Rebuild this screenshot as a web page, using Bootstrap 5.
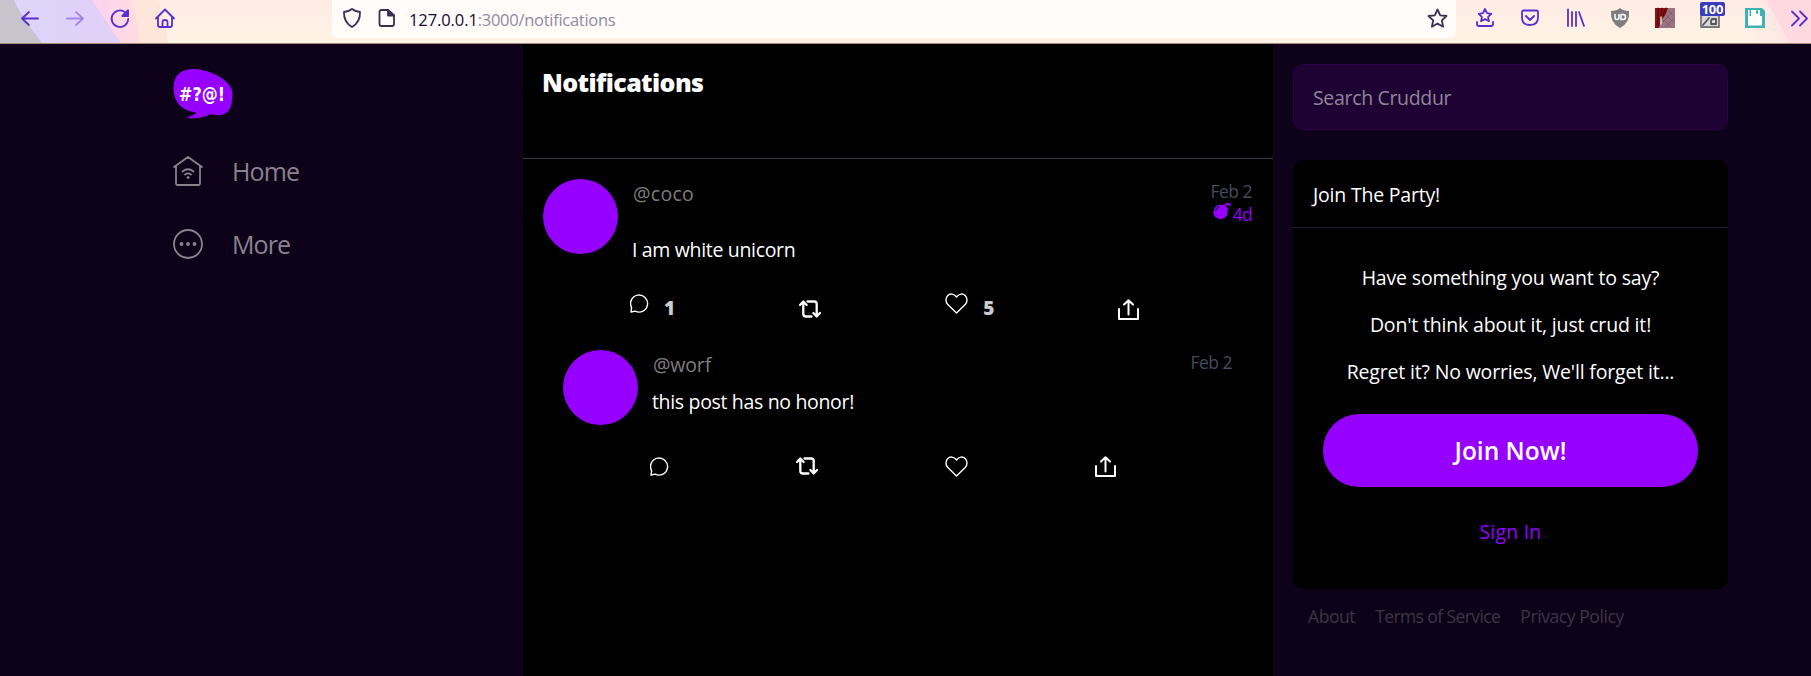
<!DOCTYPE html>
<html lang="en">
<head>
<meta charset="utf-8">
<title>Cruddur</title>
<link href="https://cdn.jsdelivr.net/npm/bootstrap@5.3.0/dist/css/bootstrap.min.css" rel="stylesheet">
<style>
body{font-family:"Open Sans","Noto Sans",sans-serif;font-size:19.5px;line-height:24px;letter-spacing:-.2px;background:#0d0219;color:#fff;height:676px;overflow:hidden}
svg{display:block;flex:none;overflow:visible}
.chrome{height:44px;border-bottom:1px solid #a98778;position:relative}
.theme-art{position:absolute;inset:0;z-index:0}
.tools{position:relative;z-index:1;height:43px}
.tools svg{fill:none;stroke:#5a2fd0;stroke-width:1.8;stroke-linecap:round;stroke-linejoin:round}
.nav-tools{width:332px;padding:8px 0 0 20px;gap:25px}
.urlbar{width:1124px;height:38px;background:#fffcfa;border-radius:0 0 6px 6px;padding:7px 8px 0 10px}
.urlbar svg{stroke:#3b2d55}
.url{font-size:16.5px;letter-spacing:-.28px;color:#918a9e;margin-left:12px;margin-top:1px}
.url b{font-weight:400;color:#17092e;letter-spacing:-.1px}
.ext{padding:8px 0 0 20px;gap:25px}
.pct{position:relative}
.count{position:absolute;top:-6px;left:0;width:25px;height:14px;background:#3b3bbd;border-radius:2px;font:700 13px/14px "Open Sans",sans-serif;letter-spacing:-.2px;text-align:center}
.shell{height:632px}
.side{width:523px;padding:25px 0 0 173px}
.side a{color:#8a828f;font-size:25px;line-height:30px;letter-spacing:-.9px;text-decoration:none;gap:28px}
.feed{width:750px;background:#000}
.feed-head{height:115px;border-bottom:1px solid #3a3b4f;padding:21px 20px 0}
.feed-head h1{font-size:25px;line-height:34px;font-weight:800;letter-spacing:-.6px;margin:0 -1px}
.post{padding:20px 20px 0;height:191px}
.reply{padding:0 40px}
.avatar{width:75px;height:75px;background:#9500ff;flex:none;margin-right:15px}
.handle{color:#7d7d7d;margin-top:3px;letter-spacing:.3px}
.msg{letter-spacing:-.33px;margin-left:-1px}
.reply .handle{letter-spacing:-.15px}
.when{font-size:17.5px;letter-spacing:-.5px;line-height:23px;color:#474a5c;text-align:right;padding:1px 1px 0 0}
.when span{color:#9500ff;letter-spacing:-.7px;gap:2px}
.acts{position:relative}
.acts svg{stroke:#fff;fill:none;stroke-linecap:round;stroke-linejoin:round}
.acts b{font-weight:800;font-size:19px;color:#ccc;letter-spacing:0;margin:3px 0 0 15px;line-height:24px;width:10px}
.aside{padding:20px 0 0 20px;width:455px}
.search{height:66px;background:#1e0233;border:1px solid #290344;border-radius:10px;color:#908598;padding:21px 19px;letter-spacing:-.33px}
.join{height:429px;background:#000;border-radius:10px;margin-top:30px}
.join-head{height:68px;border-bottom:1px solid #1c2029;padding:23px 20px}
.join p{margin:0 0 23px;letter-spacing:-.17px}
.join-body{padding:38px 30px 0;text-align:center}
.btn-join{width:375px;height:73px;background:#9500ff;color:#fff;border:0;border-radius:36px;font-size:24.5px;font-weight:600;letter-spacing:0;padding-top:8px;display:block;margin-top:30px}
.signin{color:#9500ff;letter-spacing:.2px;text-decoration:none;display:block;margin-top:33px}
.foot{padding:15px;gap:20px;font-size:17.5px}
.foot a{color:#3e3446;text-decoration:none}
</style>
</head>
<body>
<svg width="0" height="0" style="position:absolute">
<symbol id="bubble" viewBox="0 0 19 19"><path d="M1 18 L1.6 13.6 A8.5 8.5 0 1 1 5.2 17.1 Z" stroke-width="1.4"/></symbol>
<symbol id="repost" viewBox="0 0 22 18"><path d="M1 5 4.300 1.500 7.600 5M4.300 1.800V14Q4.300 16.500 6.800 16.500H12.500M8.500 1.500H15.200Q17.700 1.500 17.700 4V16M14.400 13 17.700 16.500 21 13" stroke-width="2.300"/></symbol>
<symbol id="heart" viewBox="0 0 23 21"><path d="M11.500 20 2.800 11.600C.4 9 .4 5 2.600 2.700 5 .3 9 .4 11.500 4 14 .4 18 .3 20.400 2.700 22.600 5 22.600 9 20.200 11.600Z" stroke-width="1.400"/></symbol>
<symbol id="share" viewBox="0 0 21 21"><path d="M1 10V20H20V10M10.500 15.500V1.500M6 5.500 10.500 1.300 15 5.500" stroke-width="2"/></symbol>
</svg>
<header class="chrome">
<svg class="theme-art" width="1811" height="43" viewBox="0 0 1811 43">
<defs><linearGradient id="cream" x2="0" y2="1"><stop stop-color="#feebe5"/><stop offset="1" stop-color="#fff3e5"/></linearGradient>
<linearGradient id="lilac"><stop stop-color="#dcd6fb"/><stop offset="1" stop-color="#e2cff8"/></linearGradient>
<linearGradient id="pink"><stop stop-color="#fdcff3"/><stop offset="1" stop-color="#ffdbe0"/></linearGradient>
<linearGradient id="blush"><stop stop-color="#ffe2e2" stop-opacity="0"/><stop offset="1" stop-color="#ffdfe4"/></linearGradient></defs>
<path fill="url(#cream)" d="M0 0H1811V43H0Z"/><path fill="#ffe6da" d="M100 0H157Q167 20 168 43H100Z"/>
<path fill="url(#pink)" d="M80 0H131Q138 20 139 43H80Z"/><path fill="url(#lilac)" d="M0 0H92L121 43H0Z"/><path fill="#c8c4ce" d="M0 0H14Q20 15 42 43H0Z"/>
<path fill="url(#blush)" d="M1740 0H1811V43H1740Z"/><path fill="#ffd9e0" d="M1766 0H1811V43H1790Z"/></svg>
<div class="tools d-flex">
<div class="nav-tools d-flex">
<svg width="20" height="20"><path d="M9 4 2 10.500 9 17M2 10.500H18"/></svg>
<svg width="20" height="20" opacity=".45"><path d="M11 4 18 10.500 11 17M18 10.500H2"/></svg>
<svg width="20" height="20"><path d="M18.200 11A8.300 8.300 0 1 1 15.500 4.600M18 2.500V8H12.500Z"/><path d="M18 2.500V8H12.500Z" fill="#5a2fd0"/></svg>
<svg width="20" height="20"><path d="M1 10.500 10 1.500 19 10.500M3 9V17Q3 19 5 19H15Q17 19 17 17V9M7.500 19V14Q7.500 12 10 12T12.500 14V19"/></svg>
</div>
<div class="urlbar d-flex">
<svg width="20" height="21"><path d="M10 2Q13 4.500 18 5 18.500 15 10 20 1.500 15 2 5 7 4.500 10 2Z"/></svg>
<svg width="20" height="21" style="margin-left:15px"><path d="M4.500 3H11L17 8.500V17Q17 19 15 19H4.500Q2.500 19 2.500 17V5Q2.500 3 4.500 3Z"/><path fill="#3b2d55" d="M11 3V8.500H17Z"/></svg>
<div class="url"><b>127.0.0.1</b>:3000/notifications</div>
<svg class="ms-auto" width="21" height="21"><path d="M10.500 2.500 13.200 8.300 19.500 9 14.800 13.300 16.100 19.700 10.500 16.500 4.900 19.700 6.200 13.300 1.500 9 7.800 8.300Z"/></svg>
</div>
<div class="ext d-flex">
<svg width="18" height="20"><path d="M9 1 11 5.200 15.300 5.800 12.100 8.800 12.900 13.200 9 11 5.100 13.200 5.900 8.800 2.700 5.800 7 5.200ZM1 14V16Q1 18 3 18H15Q17 18 17 16V14"/></svg>
<svg style="margin-left:2px" width="18" height="20"><path d="M2.500 2.500H15.500Q17 2.500 17 4V9.500Q17 17 9 17T1 9.500V4Q1 2.500 2.500 2.500ZM5 8 9 12 13 8"/></svg>
<svg style="margin-left:3px" width="18" height="20"><path d="M1 1.500V18M5 4V18M9 4V18M12 4 17 18"/></svg>
<svg width="20" height="20"><path fill="#7d7d7d" stroke="none" d="M10 0Q13 3 19 3 20 15 10 20 0 15 1 3 7 3 10 0Z"/><path stroke="#fff" stroke-width="1.500" d="M5 6.500V9.500Q5 11.500 7 11.500T9 9.500V6.500M11 6.500V11.500H13Q15.500 11.500 15.500 9T13 6.500H11"/></svg>
<svg width="20" height="20"><path fill="#9a7480" stroke="none" d="M0 0H20V20H0Z"/><path fill="#8c1114" stroke="none" d="M0 0H13Q11 8 6 12L4 20H0Z"/><path stroke="#54080c" stroke-width="1.200" d="M3 0V18M7 0Q7 7 5 11M11 0 8 8"/><path stroke="#ddd" stroke-width="1.500" d="M6 9V16"/><path stroke="#755864" stroke-width=".7" d="M13 2 19 8M11 7 19 15M9 12 16 19M19 2 8 14M19 10 11 19"/></svg>
<div class="pct"><svg width="20" height="20"><path fill="#d9d9d9" stroke="#777" d="M1 5H19V19H1Z"/><path stroke="#555" d="M3 17 9 10M12 11H16V16H11V13Z"/></svg><span class="count">100</span></div>
<svg width="20" height="20"><path fill="#3eb3b3" stroke="none" d="M0 0H17L20 3V20H0Z"/><path fill="#fff" stroke="none" d="M6 2H15V8H6ZM3 2H4.500V8H17V17.500H3Z"/><path stroke="#3eb3b3" stroke-width="2" d="M12 3V5"/></svg>
<svg width="20" height="20"><path d="M2 3.500 9 10.500 2 17.500M10 3.500 17 10.500 10 17.500"/></svg>
</div>
</div>
</header>
<div class="shell d-flex">
<nav class="side">
<svg width="61" height="51" viewBox="5.500 5 61 51"><path fill="#9500ff" d="M6 24C6 10 15 4.500 28 5 42 6 65 16 65 30 65 42 62 49 54 51 50 51.500 46 51 43 50 37 54 28 55 19 54 24 52 28 50 29 48.500 14 47 6 38 6 24Z"/><text x="11.500" y="36.500" font-family="DejaVu Sans" font-weight="700" font-size="20" fill="#fff" textLength="46" lengthAdjust="spacingAndGlyphs" letter-spacing="0">#?@!</text></svg>
<a href="#" class="d-flex" style="margin-top:36px"><svg width="30" height="30" viewBox="0 0 30 30" fill="none" stroke="#8a828f" stroke-width="1.800" stroke-linecap="round" stroke-linejoin="round"><path d="M1 11 15 1 29 11M3 10V27.500Q3 29 4.500 29H25.500Q27 29 27 27.500V10M9.500 15.500Q15 11 20.500 15.500M12 18.500Q15 16.300 18 18.500"/><circle cx="15" cy="21.500" r="1" fill="#8a828f" stroke-width="1"/></svg><span style="margin-left:1px">Home</span></a>
<a href="#" class="d-flex" style="margin-top:43px"><svg width="30" height="30" viewBox="0 0 30 30"><circle cx="15" cy="15" r="14" fill="none" stroke="#8a828f" stroke-width="1.800"/><g fill="#8a828f"><circle cx="8.500" cy="15" r="1.900"/><circle cx="15" cy="15" r="1.900"/><circle cx="21.500" cy="15" r="1.900"/></g></svg><span style="margin-left:1px">More</span></a>
</nav>
<main class="feed">
<div class="feed-head"><h1>Notifications</h1></div>
<article class="post">
<div class="d-flex"><div class="avatar rounded-circle"></div>
<div class="flex-grow-1"><div class="handle">@coco</div><div class="msg" style="margin-top:32px">I am white unicorn</div></div>
<div class="when">Feb 2<span class="d-flex justify-content-end"><svg width="18" height="17" viewBox="0 0 18 17"><circle cx="7.500" cy="9" r="7.200" fill="#9500ff"/><path d="M10 2 13 4.500 15 7 12 4ZM11 3 14 .5 17.500 1.200M16 1 17 3" fill="#9500ff" stroke="#9500ff" stroke-width="1.600"/><path d="M2.500 8Q3 4.500 6.500 3.700" fill="none" stroke="#000" stroke-width="1"/></svg>4d</span></div></div>
<div class="acts d-flex justify-content-between" style="padding:0 114px 0 87px;margin-top:31px">
<div class="d-flex" style="padding-top:1px"><svg width="19" height="19"><use href="#bubble"/></svg><b style="margin-top:2px">1</b></div><svg width="22" height="18" style="margin-top:7px"><use href="#repost"/></svg>
<div class="d-flex"><svg width="23" height="21"><use href="#heart"/></svg><b>5</b></div><svg style="margin-top:6px" width="21" height="21"><use href="#share"/></svg></div>
</article>
<article class="reply">
<div class="d-flex"><div class="avatar rounded-circle"></div>
<div class="flex-grow-1"><div class="handle">@worf</div><div class="msg" style="margin-top:13px">this post has no honor!</div></div>
<div class="when">Feb 2</div></div>
<div class="acts d-flex justify-content-between" style="padding:0 117px 0 87px;margin-top:31px">
<svg style="margin-top:1px" width="19" height="19"><use href="#bubble"/></svg><svg style="margin-top:1px" width="22" height="18"><use href="#repost"/></svg><svg width="23" height="21"><use href="#heart"/></svg><svg width="21" height="21"><use href="#share"/></svg></div>
</article>
</main>
<aside class="aside">
<div class="search">Search Cruddur</div>
<section class="join">
<div class="join-head">Join The Party!</div>
<div class="join-body"><p>Have something you want to say?</p><p>Don't think about it, just crud it!</p><p>Regret it? No worries, We'll forget it...</p>
<button class="btn btn-join">Join Now!</button><a href="#" class="signin">Sign In</a></div>
</section>
<footer class="foot d-flex"><a href="#" style="letter-spacing:-.42px">About</a><a href="#" style="letter-spacing:-.59px">Terms of Service</a><a href="#" style="letter-spacing:-.42px">Privacy Policy</a></footer>
</aside>
</div>
<script src="https://cdn.jsdelivr.net/npm/bootstrap@5.3.0/dist/js/bootstrap.bundle.min.js"></script>
</body>
</html>
